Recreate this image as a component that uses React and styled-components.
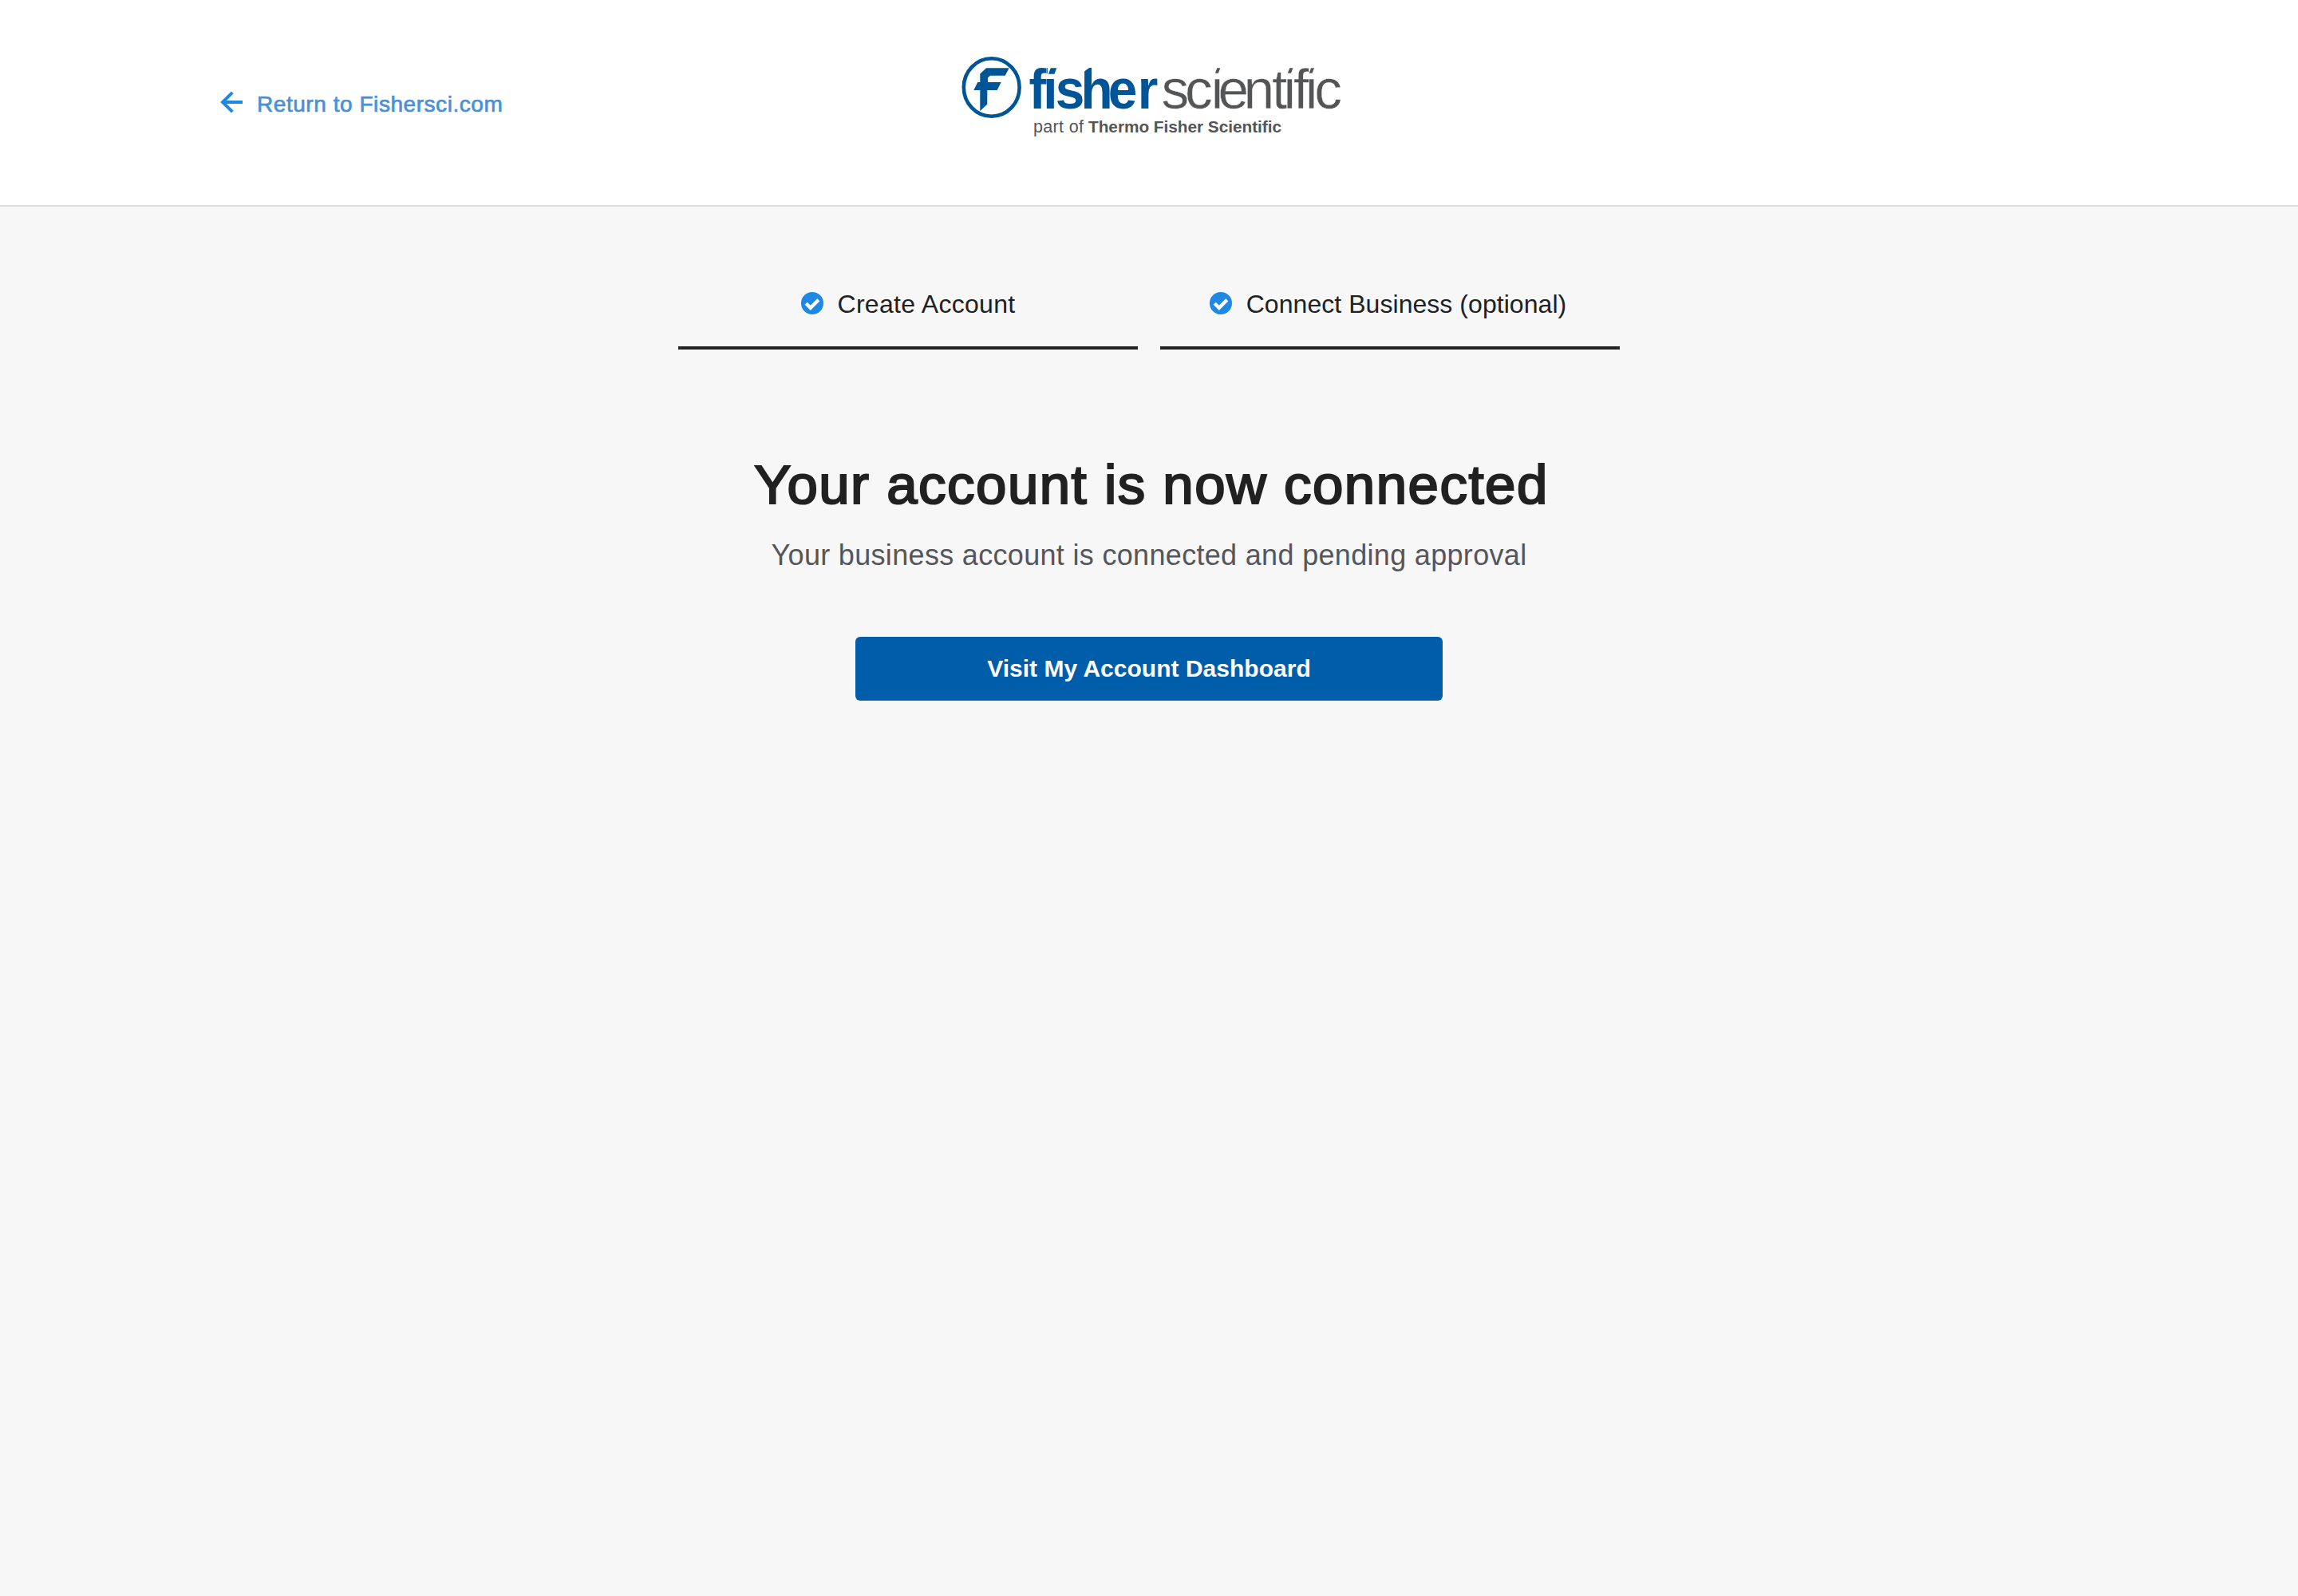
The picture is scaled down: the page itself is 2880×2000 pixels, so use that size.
import React from "react";
import styled, { createGlobalStyle } from "styled-components";

const GlobalStyle = createGlobalStyle`
    * {
        box-sizing: border-box;
    }
    body {
        margin: 0;
        background-color: #f7f7f7;
        color: #212121;
        font-family: "Liberation Sans", Arial, sans-serif;
    }
`

const Page = styled.div`
    min-height: 2000px;
`

const Header = styled.header`
    display: grid;
    grid-template-columns: 1fr 480px 1fr;
    align-items: start;
    height: 259px;
    padding: 66px 276px 0;
    background-color: #fff;
    border-bottom: 2px solid #dedede;
`

const BackLink = styled.a`
    display: flex;
    align-items: center;
    margin-top: 47px;
    height: 36px;
    color: #4a90d9;
    font-size: 28px;
    line-height: 36px;
    letter-spacing: 0.55px;
    -webkit-text-stroke: 0.7px #4a90d9;
    text-decoration: none;
    white-space: nowrap;

    svg {
        margin: 0 16px 6px 0;
    }
`

const LogoSvg = styled.svg`
    display: block;
    overflow: visible;
    font-family: "Liberation Sans", Arial, sans-serif;
    font-variant-ligatures: none;
`

const Main = styled.main`
    display: flex;
    flex-direction: column;
    align-items: center;
`

const Steps = styled.ol`
    display: flex;
    gap: 28px;
    margin: 0;
    padding: 85px 0 0;
    list-style: none;
`

const Step = styled.li`
    display: flex;
    justify-content: center;
    width: 576px;
    height: 94px;
    padding: 19px ${props => props.$offset}px 0 0;
    border-bottom: 4px solid #212324;
    font-size: 32px;
    line-height: 36px;
    letter-spacing: ${props => props.$spacing}px;

    svg {
        margin: 3px 18px 0 0;
    }
`

const Title = styled.h1`
    margin: 132px 0 0;
    padding-left: 6px;
    font-size: 69px;
    font-weight: 400;
    line-height: 76px;
    letter-spacing: 1.48px;
    -webkit-text-stroke: 2.2px #212121;
`

const SubTitle = styled.p`
    margin: 30px 0 0;
    color: #55565c;
    font-size: 36px;
    line-height: 40px;
    letter-spacing: 0.32px;
`

const Button = styled.button`
    width: 736px;
    height: 80px;
    margin-top: 82px;
    border: 0;
    border-radius: 6px;
    background-color: #005daa;
    color: #fff;
    font-family: inherit;
    font-size: 30px;
    font-weight: 700;
    letter-spacing: 0.02px;
`

const ArrowIcon = () => (
    <svg width="30" height="28" viewBox="0 0 30 28" fill="none" stroke="#1e88e5" strokeWidth="4">
        <path d="M28 14H3M15.3 1.8L3 14L15.3 26.2" />
    </svg>
)

const CheckIcon = () => (
    <svg width="28" height="28" viewBox="0 0 28 28">
        <circle cx="14" cy="14" r="14" fill="#1e88e5" />
        <path d="M6.2 14.2L11.8 19.8L21.8 9.8" fill="none" stroke="#fff" strokeWidth="4.4" />
    </svg>
)

const Logo = () => (
    <LogoSvg width="480" height="110" viewBox="0 0 480 110">
        <ellipse cx="42.7" cy="43.5" rx="34.9" ry="36.3" fill="none" stroke="#005596" strokeWidth="4.6" />
        <path
            fill="#005596"
            d="M36 19.3H64.7L59.7 28.7H41L38 31.5V37H54.7L49.7 47H37.3V64.7L28.3 73V47H20.3L25.3 37H28.3V26.5Z"
        />
        <text
            x="94.7 113.4 129.9 163.5 199.8 239"
            y="70"
            transform="scale(0.945 1)"
            fontSize="69.5"
            fontWeight="700"
            fill="#005596"
        >
            fisher
        </text>
        <text
            x="255.5 285 317.8 326.4 358.5 394 408.5 421 436 447.2"
            y="70"
            fontSize="69.5"
            fill="#545557"
            stroke="#fff"
            strokeWidth="0.4"
        >
            scientific
        </text>
        {/* slanted dots and the cut top of the h */}
        <path fill="#fff" d="M112.8 16H124V31H112.8ZM157 16H169L157 25ZM320 16H331V31H320ZM411 16H421V31H411ZM440.8 16H448V31H440.8Z" />
        <path fill="#005596" d="M116.7 19.3H124.3L121.5 26.7H114Z" />
        <path
            fill="#545557"
            d="M325.3 19.3H329.3L326.9 25.7H322.9ZM416.3 19.3H420.5L418 25.7H413.8ZM443 19.3H447L444.6 25.7H440.8Z"
        />
        <text x="95" y="100.3" fontSize="21.5" fill="#545557" textLength="63">part of</text>
        <text x="164" y="100.3" fontSize="20.8" fontWeight="700" fill="#545557" textLength="242">
            Thermo Fisher Scientific
        </text>
    </LogoSvg>
)

const steps = [
    { name: "Create Account", spacing: 0.3, offset: 0 },
    { name: "Connect Business (optional)", spacing: 0.05, offset: 5 },
]

export default () => {
    return (
        <Page>
            <GlobalStyle />
            <Header>
                <BackLink href="#">
                    <ArrowIcon />
                    Return to Fishersci.com
                </BackLink>
                <Logo />
            </Header>
            <Main>
                <Steps>
                    {steps.map(s => (
                        <Step key={s.name} $spacing={s.spacing} $offset={s.offset}>
                            <CheckIcon />
                            {s.name}
                        </Step>
                    ))}
                </Steps>
                <Title>Your account is now connected</Title>
                <SubTitle>Your business account is connected and pending approval</SubTitle>
                <Button>Visit My Account Dashboard</Button>
            </Main>
        </Page>
    )
}
